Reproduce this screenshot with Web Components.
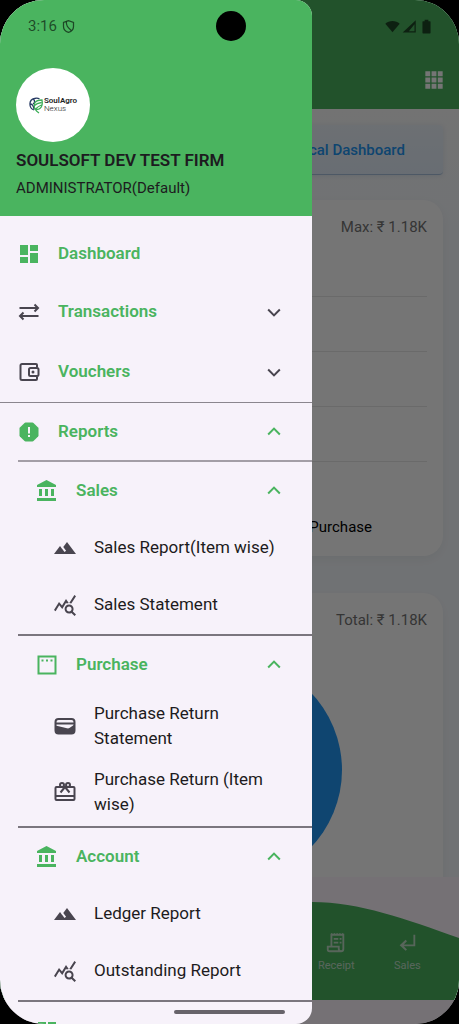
<!DOCTYPE html>
<html lang="en">
<head>
<meta charset="utf-8">
<meta name="viewport" content="width=device-width, initial-scale=1">
<title>SoulAgro Nexus</title>
<style>
html, body { margin: 0; height: 100%; background: #000; }
body { font-family: Roboto, "Liberation Sans", sans-serif; color: #1d1b20; }
</style>
</head>
<body>
<app-shell>
  <app-bar slot="page"></app-bar>
  <dashboard-view slot="page"></dashboard-view>
  <bottom-nav slot="page">
    <bottom-link icon="receipt">Receipt</bottom-link>
    <bottom-link icon="return">Sales</bottom-link>
  </bottom-nav>
  <nav-drawer slot="drawer">
    <drawer-account slot="header">
      <span slot="firm">SOULSOFT DEV TEST FIRM</span>
      <span slot="role">ADMINISTRATOR(Default)</span>
    </drawer-account>
    <drawer-link icon="dashboard" primary>Dashboard</drawer-link>
    <drawer-group icon="swap" label="Transactions"></drawer-group>
    <drawer-group icon="wallet" label="Vouchers"></drawer-group>
    <drawer-group icon="report" label="Reports" open root>
      <drawer-group icon="bank" label="Sales" open lead>
        <drawer-link icon="landscape">Sales Report(Item wise)</drawer-link>
        <drawer-link icon="stats">Sales Statement</drawer-link>
      </drawer-group>
      <drawer-group icon="window" label="Purchase" open>
        <drawer-link icon="purse">Purchase Return Statement</drawer-link>
        <drawer-link icon="gift">Purchase Return (Item wise)</drawer-link>
      </drawer-group>
      <drawer-group icon="bank" label="Account" open>
        <drawer-link icon="landscape">Ledger Report</drawer-link>
        <drawer-link icon="stats">Outstanding Report</drawer-link>
      </drawer-group>
      <drawer-group icon="dashboard" label="Stock" open></drawer-group>
    </drawer-group>
  </nav-drawer>
  <status-bar slot="system"></status-bar>
</app-shell>

<script>
const ICONS = {
  dashboard: '<path d="M3 13h8V3H3v10zm0 8h8v-6H3v6zm10 0h8V11h-8v10zm0-18v6h8V3h-8z"/>',
  swap: '<g fill="none" stroke="currentColor" stroke-width="2"><path d="M2.500 8H21M17.500 4.500 21 8l-3.500 3.500M21.500 16H3M6.500 12.500 3 16l3.500 3.500"/></g>',
  wallet: '<g fill="none" stroke="currentColor" stroke-width="2"><path d="M20 7.500V5a1 1 0 0 0-1-1H5a1.500 1.500 0 0 0-1.500 1.500v13A1.500 1.500 0 0 0 5 20h14a1 1 0 0 0 1-1v-2.500"/><rect x="12" y="8" width="9.500" height="8" rx="1.500"/></g><circle cx="16" cy="12" r="1.500"/>',
  report: '<path d="M8.500 2.500h7l1 .4 4.600 4.600.4 1v7l-.4 1-4.600 4.600-1 .4h-7l-1-.4-4.600-4.600-.4-1v-7l.4-1 4.600-4.600z"/><path fill="#f7f2fa" d="M11 7h2v6.500h-2zM11 15h2v2h-2z"/>',
  bank: '<path d="M4 10v7h3v-7H4zm6 0v7h3v-7h-3zM2 22h19v-3H2v3zm14-12v7h3v-7h-3zm-4.500-9L2 6v2h19V6l-9.500-5z"/>',
  landscape: '<path d="M14 6l-3.750 5 2.850 3.800-1.600 1.200C9.810 13.750 7 10 7 10l-6 8h22L14 6z"/>',
  stats: '<path d="M19.880 18.470c.44-.7.7-1.510.7-2.390 0-2.490-2.010-4.500-4.500-4.500s-4.500 2.010-4.500 4.500 2.010 4.500 4.490 4.500c.88 0 1.700-.26 2.390-.7L21.580 23 23 21.580l-3.120-3.110zm-3.800.11c-1.380 0-2.500-1.120-2.500-2.500s1.120-2.500 2.500-2.500 2.500 1.120 2.500 2.500-1.120 2.500-2.500 2.500zm-.36-8.500c-.74.02-1.450.18-2.100.45l-.55-.83-3.800 6.180-3.010-3.520-3.630 5.810L1 17l5-8 3 3.500L13 6l2.720 4.080zm2.590.5c-.64-.28-1.330-.45-2.050-.49L21.380 2 23 3.180l-4.690 7.400z"/>',
  window: '<path fill="none" stroke="currentColor" stroke-width="2" d="M3.500 3.500h17v17h-17z"/><path d="M6.500 6.500h2v2h-2zM11 6.500h2v2h-2zM15.500 6.500h2v2h-2z"/>',
  purse: '<rect x="2.500" y="5" width="19" height="14.500" rx="3" fill="none" stroke="currentColor" stroke-width="2"/><path d="M3 8.500h18v2H3zM2.500 11.500l11.500 2.800c1 .2 2 0 2.800-.6l4.700-3.200V17a3 3 0 0 1-3 3h-13a3 3 0 0 1-3-3z"/>',
  gift: '<g fill="none" stroke="currentColor" stroke-width="2"><rect x="2.500" y="7" width="19" height="13" rx="1"/><path d="M2 16h20M12 7l-4.500 5.500M12 7l4.500 5.500"/><circle cx="9" cy="5" r="2"/><circle cx="15" cy="5" r="2"/></g>',
  down: '<path fill="none" stroke="currentColor" stroke-width="2.400" d="M5 9l7 7 7-7"/>',
  up: '<path fill="none" stroke="currentColor" stroke-width="2.400" d="M5 15l7-7 7 7"/>',
  apps: '<path d="M4 4h4.500v4.500H4zM9.750 4h4.500v4.500h-4.500zM15.500 4H20v4.500h-4.500zM4 9.750h4.500v4.500H4zM9.750 9.750h4.500v4.500h-4.500zM15.500 9.750H20v4.500h-4.500zM4 15.500h4.500V20H4zM9.750 15.500h4.500V20h-4.500zM15.500 15.500H20V20h-4.500z"/>',
  receipt: '<g fill="none" stroke="currentColor" stroke-width="2"><path d="M7 16V3h13v15.500a2.500 2.500 0 0 1-5 0V16H3v3a2 2 0 0 0 2 2h12.500"/><path d="M9.500 7.500h5M9.500 11.500h5M16 7.500h2M16 11.500h2"/><path stroke-dasharray="1.500 1.500" stroke-width="1.500" d="M6.500 2h14"/></g>',
  return: '<path d="M10.500 8.500l1.500 1.500L8.500 13.500H19V3h2v12.500H8.500L12 19l-1.500 1.500L4 14.500z"/>',
  shield: '<g fill="none" stroke="currentColor" stroke-width="2"><path d="M12 2.500 4 5.500V12c0 4.500 3.300 8 8 9.500 4.700-1.500 8-5 8-9.500V5.500z"/><path d="M8.500 4.500c0 6 1.500 8.500 8 14"/></g>',
  wifi: '<path d="M12 21 .5 7.500C3.500 4.800 7.500 3.200 12 3.200S20.500 4.800 23.500 7.500z"/>',
  signal: '<path fill-rule="evenodd" d="M1 21.500 22 2v19.500zM11 19.500h9V8.500z"/>',
  battery: '<path d="M9 1h6v2.500h2.500q1 0 1 1V22q0 1-1 1h-11q-1 0-1-1V4.500q0-1 1-1H9z"/>'
};

function define(name, markup, connected) {
  const template = document.createElement('template');
  template.innerHTML = markup;
  customElements.define(name, class extends HTMLElement {
    constructor() {
      super();
      this.attachShadow({ mode: 'open' }).append(template.content.cloneNode(true));
    }
    connectedCallback() { if (connected) connected.call(this, this.shadowRoot); }
  });
}

define('app-icon', `
<style>
:host { display: block; flex: none; width: 24px; height: 24px; }
svg { display: block; width: 100%; height: 100%; fill: currentColor; }
</style>
<svg viewBox="0 0 24 24" aria-hidden="true"></svg>`, function (root) {
  root.querySelector('svg').innerHTML = ICONS[this.getAttribute('name')] || '';
});

define('app-shell', `
<style>
:host { display: block; position: relative; height: 100vh; overflow: hidden; border-radius: 44px; background: #fef7ff; }
.page { display: flex; flex-direction: column; height: 100%; }
.scrim { position: absolute; inset: 0; background: rgba(0, 0, 0, .54); }
.drawer { position: absolute; inset: 0 auto 0 0; width: 68%; max-width: 360px; }
</style>
<div class="page"><slot name="page"></slot></div>
<div class="scrim"></div>
<div class="drawer"><slot name="drawer"></slot></div>
<slot name="system"></slot>`);

define('status-bar', `
<style>
:host { position: absolute; inset: 0; display: flex; flex-direction: column; justify-content: space-between; pointer-events: none; color: rgba(0, 0, 0, .6); }
.top { display: grid; grid-template-columns: 1fr 30px 1fr; align-items: center; padding: 11px 25px 0 28px; }
.side { display: flex; align-items: center; gap: 4px; font-size: 15px; }
.right { justify-content: flex-end; gap: 2px; }
.camera { width: 30px; height: 30px; border-radius: 50%; background: #000; }
app-icon { width: 15px; height: 15px; }
.home { align-self: center; width: 111px; height: 4px; margin-bottom: 10px; border-radius: 2px; background: #67636a; }
</style>
<div class="top">
  <div class="side"><span>3:16</span><app-icon name="shield"></app-icon></div>
  <div class="camera"></div>
  <div class="side right"><app-icon name="wifi"></app-icon><app-icon name="signal"></app-icon><app-icon name="battery"></app-icon></div>
</div>
<div class="home"></div>`);

define('app-bar', `
<style>
:host { display: flex; flex: none; align-items: flex-end; justify-content: flex-end; height: 109px; padding: 0 12px 16px; box-sizing: border-box; background: #4ab45f; color: #fff; }
button { padding: 0; border: 0; background: none; color: inherit; }
app-icon { width: 26px; height: 26px; }
</style>
<button aria-label="Apps"><app-icon name="apps"></app-icon></button>`);

define('dashboard-view', `
<style>
:host { display: flex; flex-direction: column; flex: 1; min-height: 0; overflow: hidden; padding: 16px 16px 0; background: linear-gradient(#fafafa 0, #f5f9fd 120px); }
.tab { flex: none; display: flex; align-items: center; justify-content: flex-end; height: 50px; box-sizing: border-box; margin-bottom: 25px; padding: 0 38px; border: 0; border-bottom: 1px solid #a8c0dc; border-radius: 4px; background: linear-gradient(#edf3fa, #e3eefa); box-shadow: 0 1px 5px rgba(120, 150, 190, .2); color: #2196f3; font: 500 15px Roboto, sans-serif; }
chart-card { margin-bottom: 37px; }
.lines { display: grid; grid-auto-rows: 54px; gap: 1px; padding-top: 5px; }
.lines i { border-bottom: 1px solid #e6e6e6; }
.legend { padding: 55px 55px 0 0; text-align: right; font-size: 15px; line-height: 20px; color: #000; }
.pie { width: 224px; height: 224px; margin: 27px auto 0; border-radius: 50%; background: #2196f3; }
</style>
<button class="tab">Graphical Dashboard</button>
<chart-card><span slot="title">Max: ₹ 1.18K</span>
  <div class="lines"><i></i><i></i><i></i><i></i></div>
  <div class="legend">Purchase</div>
</chart-card>
<chart-card><span slot="title">Total: ₹ 1.18K</span>
  <div class="pie"></div>
</chart-card>`);

define('chart-card', `
<style>
:host { display: block; flex: none; padding: 16px 16px 19px; border-radius: 20px; background: #fff; box-shadow: 0 4px 12px rgba(0, 0, 0, .05); }
.title { text-align: right; font-size: 15px; line-height: 22px; color: #757575; }
</style>
<div class="title"><slot name="title"></slot></div>
<slot></slot>`);

define('bottom-nav', `
<style>
:host { display: grid; flex: none; height: 123px; margin-bottom: 24px; background: #fef7ff; color: #fff; }
svg, nav { grid-area: 1 / 1; width: 100%; height: 123px; }
svg { display: block; fill: #4ab45f; }
nav { display: flex; justify-content: flex-end; box-sizing: border-box; padding: 55px 16px 0; }
</style>
<svg viewBox="0 0 459 123" preserveAspectRatio="none" aria-hidden="true"><path d="M0 61C80 40 210 25 312 25C360 25 405 42 459 61V123H0z"/></svg>
<nav><slot></slot></nav>`);

define('bottom-link', `
<style>
:host { display: block; width: calc(100% / 6); }
a { display: flex; flex-direction: column; align-items: center; gap: 4px; color: #dfe8e1; font-size: 11px; line-height: 16px; text-decoration: none; opacity: .8; }
app-icon { width: 22px; height: 22px; }
</style>
<a href="#"><app-icon></app-icon><slot></slot></a>`, function (root) {
  root.querySelector('app-icon').setAttribute('name', this.getAttribute('icon'));
  root.querySelector('app-icon').connectedCallback();
});

define('nav-drawer', `
<style>
:host { display: flex; flex-direction: column; height: 100%; overflow: hidden; background: #f7f2fa; border-radius: 0 16px 16px 0; }
nav { flex: 1; min-height: 0; overflow: auto; scrollbar-width: none; padding-top: 9px; }
</style>
<slot name="header"></slot>
<nav><slot></slot></nav>`);

define('drawer-account', `
<style>
:host { display: block; flex: none; padding: 68px 16px 16px; background: #4ab45f; }
.avatar { display: flex; align-items: center; justify-content: center; gap: 1px; width: 74px; height: 74px; border-radius: 50%; background: #fff; }
.avatar svg { width: 14px; height: 17px; }
.brand { font-size: 8px; line-height: 8px; font-weight: 600; color: #222; }
.brand span { display: block; font-weight: 300; }
h1 { margin: 8px 0 6px; font-size: 17px; line-height: 20px; font-weight: 600; }
p { margin: 0; font-size: 15px; line-height: 24px; }
</style>
<div class="avatar">
  <svg viewBox="0 0 28 34" fill="none" stroke-width="2.600" aria-hidden="true">
    <path stroke="#263a63" d="M10 26C-1 22-1 5 11 3c4-1 7-1 10 1M9 4c3 4 3 7-1 10M2 14c4 0 7 3 8 10"/>
    <path stroke="#3fae5a" d="M26 6C12 6 8 12 12 25c13 1 16-8 14-19zM12 25c4-4 7-7 13-9M11 17c4-4 8-5 14-6M13 25c1 3 4 5 7 7"/>
  </svg>
  <div class="brand">SoulAgro<span>Nexus</span></div>
</div>
<h1><slot name="firm"></slot></h1>
<p><slot name="role"></slot></p>`);

define('drawer-link', `
<style>
:host { display: block; }
a { display: flex; align-items: center; gap: 17px; min-height: 57px; box-sizing: border-box; padding: 8px 28px 8px 17px; color: #1d1b20; font-size: 17px; line-height: 25px; text-decoration: none; }
app-icon { color: #49454f; }
:host([primary]) a { color: #4ab45f; font-weight: 600; }
:host([primary]) app-icon { color: #4ab45f; }
</style>
<a href="#"><app-icon></app-icon><span><slot></slot></span></a>`, function (root) {
  const icon = root.querySelector('app-icon');
  icon.setAttribute('name', this.getAttribute('icon'));
  icon.connectedCallback();
});

define('drawer-group', `
<style>
:host { display: block; padding: 1px 0 2px; }
:host([open]) { padding: 0 0 1px; border-bottom: 2px solid #7b767e; }
:host([root]) { padding: 0; border-top: 1px solid #8b868e; }
:host([lead]) { border-top: 2px solid #a39ea6; }
button { display: flex; align-items: center; gap: 17px; width: 100%; min-height: 57px; padding: 0 28px 0 17px; border: 0; background: none; color: #4ab45f; font: 600 17px/25px Roboto, sans-serif; text-align: left; }
.label { flex: 1; }
app-icon { color: #49454f; }
.chevron { width: 20px; height: 20px; }
:host([open]) app-icon { color: #4ab45f; }
.items { padding-left: 18px; }
:host(:not([open])) .items { display: none; }
</style>
<button><app-icon class="icon"></app-icon><span class="label"></span><app-icon class="chevron"></app-icon></button>
<div class="items"><slot></slot></div>`, function (root) {
  const draw = () => {
    const open = this.hasAttribute('open');
    const icon = root.querySelector('.icon');
    const chevron = root.querySelector('.chevron');
    icon.setAttribute('name', this.getAttribute('icon'));
    chevron.setAttribute('name', open ? 'up' : 'down');
    icon.connectedCallback();
    chevron.connectedCallback();
    root.querySelector('button').setAttribute('aria-expanded', open);
  };
  root.querySelector('.label').textContent = this.getAttribute('label');
  root.querySelector('button').onclick = () => { this.toggleAttribute('open'); draw(); };
  draw();
});
</script>
</body>
</html>
